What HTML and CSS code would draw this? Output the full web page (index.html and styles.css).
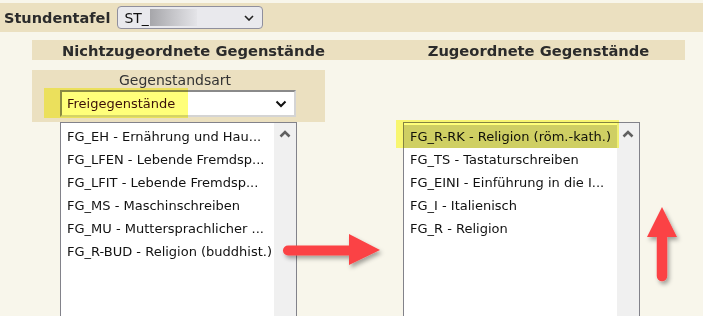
FILE: index.html
```html
<!DOCTYPE html>
<html lang="de">
<head>
<meta charset="utf-8">
<title>Stundentafel</title>
<link rel="stylesheet" href="styles.css">
</head>
<body>
<div class="page">
  <div class="topbar">
    <span class="top-label">Stundentafel</span>
    <div class="st-select">
      <span class="st-text">ST_</span>
      <span class="redacted"></span>
      <svg class="st-chev" width="10" height="6" viewBox="0 0 10 6"><polyline points="1,1 5,5 9,1" fill="none" stroke="#222" stroke-width="1.6"/></svg>
    </div>
  </div>

  <div class="main">
    <div class="headers">
      <div class="h-left">Nichtzugeordnete Gegenstände</div>
      <div class="h-gap"></div>
      <div class="h-right">Zugeordnete Gegenstände</div>
    </div>

    <div class="content">
      <div class="col-left">
        <div class="panel">
          <div class="panel-label">Gegenstandsart</div>
          <div class="type-select">
            <span class="type-text">Freigegenstände</span>
            <svg class="type-chev" width="12" height="8" viewBox="0 0 12 8"><polyline points="1.5,1.5 6,6 10.5,1.5" fill="none" stroke="#111" stroke-width="2"/></svg>
          </div>
        </div>
        <div class="listbox lb-left">
          <div class="items">
            <div class="item">FG_EH - Ernährung und Hau...</div>
            <div class="item">FG_LFEN - Lebende Fremdsp...</div>
            <div class="item">FG_LFIT - Lebende Fremdsp...</div>
            <div class="item">FG_MS - Maschinschreiben</div>
            <div class="item">FG_MU - Muttersprachlicher ...</div>
            <div class="item">FG_R-BUD - Religion (buddhist.)</div>
          </div>
          <div class="scrollbar">
            <svg class="sb-up" width="12" height="8" viewBox="0 0 12 8"><polyline points="1.5,6.5 6,2 10.5,6.5" fill="none" stroke="#606060" stroke-width="2.6"/></svg>
          </div>
        </div>
      </div>

      <div class="col-right">
        <div class="listbox lb-right">
          <div class="items">
            <div class="item selected">FG_R-RK - Religion (röm.-kath.)</div>
            <div class="item">FG_TS - Tastaturschreiben</div>
            <div class="item">FG_EINI - Einführung in die I...</div>
            <div class="item">FG_I - Italienisch</div>
            <div class="item">FG_R - Religion</div>
          </div>
          <div class="scrollbar">
            <svg class="sb-up" width="12" height="8" viewBox="0 0 12 8"><polyline points="1.5,6.5 6,2 10.5,6.5" fill="none" stroke="#606060" stroke-width="2.6"/></svg>
          </div>
        </div>
      </div>
    </div>
  </div>

  <div class="marker marker-type"></div>
  <div class="marker marker-sel"></div>

  <svg class="arrows" width="703" height="316" viewBox="0 0 703 316">
    <defs>
      <filter id="sh" x="-20%" y="-20%" width="150%" height="160%">
        <feDropShadow dx="2" dy="3" stdDeviation="2" flood-color="#000" flood-opacity="0.35"/>
      </filter>
    </defs>
    <g filter="url(#sh)" fill="#fb4245">
      <line x1="288" y1="250.5" x2="352" y2="250.5" stroke="#fb4245" stroke-width="10" stroke-linecap="round"/>
      <polygon points="349,234 380,250 349,265"/>
      <line x1="662" y1="234" x2="662" y2="276" stroke="#fb4245" stroke-width="10.5" stroke-linecap="round"/>
      <polygon points="647,237 662,207 677,237"/>
    </g>
  </svg>
</div>
</body>
</html>
```

FILE: styles.css
```css
html, body {
  margin: 0;
  padding: 0;
}
body {
  background: #f8f6eb;
  font-family: "DejaVu Sans", Verdana, sans-serif;
  color: #111;
}
.page {
  position: relative;
  width: 703px;
  height: 316px;
  overflow: hidden;
}
.topbar {
  margin-top: 3px;
  height: 29px;
  background: #ebe0c0;
  display: flex;
  align-items: center;
  padding-left: 4px;
  gap: 7px;
}
.top-label {
  font-weight: bold;
  font-size: 14.5px;
  color: #2b2b2b;
}
.st-select {
  height: 21px;
  border: 1px solid #8f8f9d;
  border-radius: 4px;
  background: #e9e9ed;
  display: flex;
  align-items: center;
  padding-left: 6px;
  box-sizing: content-box;
  width: 138px;
}
.st-text {
  font-size: 14px;
  color: #111;
}
.redacted {
  width: 47px;
  height: 17px;
  margin-left: 1px;
  background: linear-gradient(90deg, #a6a6aa 0%, #c6c6ca 50%, #e4e4e8 100%);
}
.st-chev {
  margin-left: auto;
  margin-right: 8px;
}
.main {
  margin-top: 8px;
  margin-left: 32px;
  width: 653px;
}
.headers {
  height: 20px;
  background: #ebe0c0;
  display: grid;
  grid-template-columns: 323px 37px 293px;
  align-items: center;
  font-weight: bold;
  font-size: 14.7px;
  color: #2b2b2b;
}
.h-left, .h-right {
  text-align: center;
  white-space: nowrap;
}
.content {
  display: flex;
}
.col-left {
  width: 293px;
}
.panel {
  margin-top: 10px;
  height: 52px;
  background: #ebe0c0;
  display: flex;
  flex-direction: column;
}
.panel-label {
  height: 20px;
  line-height: 20px;
  text-align: center;
  font-size: 14px;
  color: #333;
  margin-right: 7px;
}
.type-select {
  margin-left: 28px;
  height: 23px;
  background: #fff;
  border-top: 2px solid #8a8a8a;
  border-left: 2px solid #8a8a8a;
  border-right: 2px solid #d4d4d4;
  border-bottom: 2px solid #d4d4d4;
  display: flex;
  align-items: center;
  padding-left: 5px;
  box-sizing: content-box;
  width: 227px;
}
.type-text {
  font-size: 13px;
  color: #3a1010;
}
.type-chev {
  margin-left: auto;
  margin-right: 7px;
}
.listbox {
  height: 200px;
  width: 235px;
  border: 1px solid #82828a;
  background: #fff;
  display: flex;
}
.lb-left {
  margin-left: 28px;
}
.col-right {
  margin-left: 78px;
  padding-top: 62px;
}
.items {
  flex: 1;
  padding-top: 2px;
  min-width: 0;
}
.item {
  height: 23px;
  line-height: 23px;
  padding-left: 6px;
  font-size: 13px;
  white-space: nowrap;
  overflow: hidden;
  color: #111;
}
.item.selected {
  background: #cfcfcf;
}
.scrollbar {
  width: 22px;
  background: #f0f0f0;
  display: flex;
  justify-content: center;
}
.sb-up {
  margin-top: 7px;
}
.marker {
  position: absolute;
  background: #ffff7a;
  mix-blend-mode: multiply;
}
.marker-type {
  left: 44px;
  top: 88px;
  width: 144px;
  height: 30px;
}
.marker-sel {
  left: 396px;
  top: 120px;
  width: 223px;
  height: 28px;
}
.arrows {
  position: absolute;
  left: 0;
  top: 0;
  pointer-events: none;
}
```
